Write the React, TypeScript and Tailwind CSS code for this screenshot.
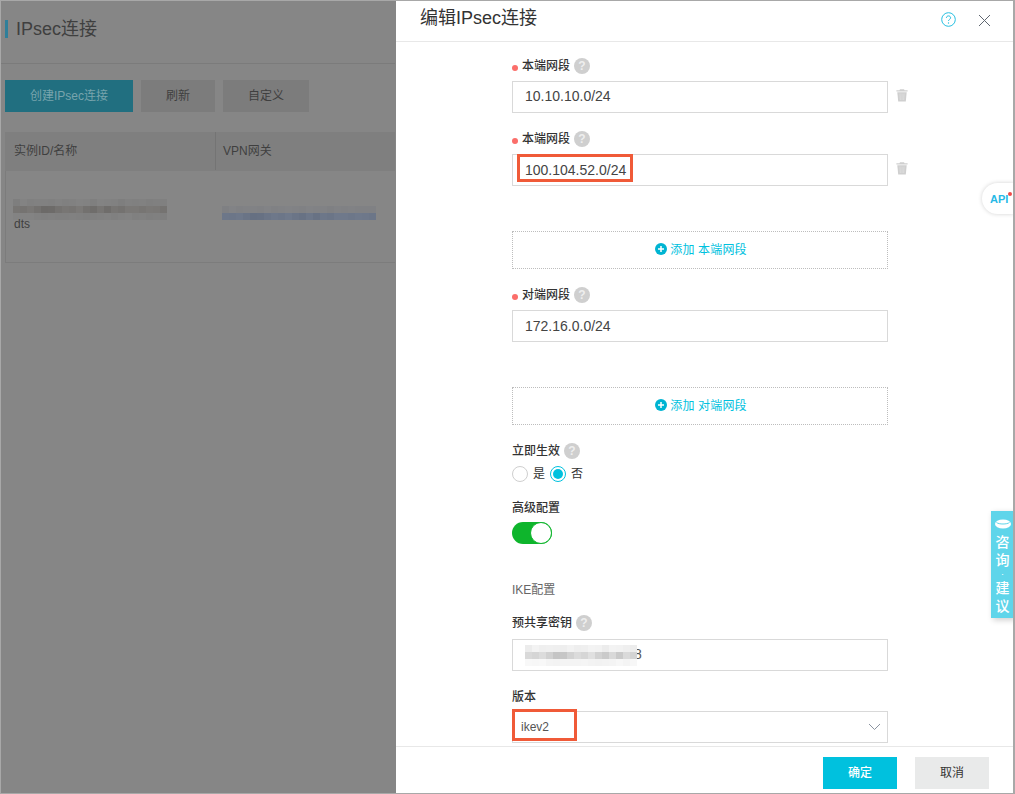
import React from "react";

const font = { fontFamily: '"Liberation Sans", "Noto Sans CJK SC", sans-serif' };

function Help() {
  return (
    <span className="ml-1 flex h-4 w-4 items-center justify-center rounded-full bg-[#cfcfcf] text-[12px] font-bold leading-none text-[#eeeeee]">?</span>
  );
}

function Label({ text, req, help = true }: { text: string; req?: boolean; help?: boolean }) {
  return (
    <div className="flex h-4 items-center text-[12px] font-medium leading-4 text-[#333333]">
      {req && <span className="mr-1 mt-[3px] h-[6px] w-[6px] rounded-full bg-[#fb6e6a]" />}
      <span>{text}</span>
      {help && <Help />}
    </div>
  );
}

function Trash() {
  return (
    <svg width="12" height="14" viewBox="0 0 12 14" className="ml-2 mt-[7px] self-start">
      <path d="M4 1.200h4l.5 1H11.600v1.300H.4V2.200h3.100z" fill="#cfcfcf" />
      <path d="M1.300 4.200h9.400L9.800 13.400H2.200z" fill="#cfcfcf" />
      <path d="M4 5.500l.3 6.500M6 5.500V12M8 5.500L7.700 12" stroke="#e6e6e6" strokeWidth=".6" />
    </svg>
  );
}

function Field({ value, trash, flush, children }: { value?: string; trash?: boolean; flush?: boolean; children?: React.ReactNode }) {
  return (
    <div className="flex">
      <div className={flush ? "relative flex h-8 w-[376px] items-center border border-[#d9d9d9] bg-white pl-3 pt-[1px] text-[14px] text-[#444444]" : "relative flex h-8 w-[376px] items-center border border-[#d9d9d9] bg-white pb-[1px] pl-3 text-[14px] text-[#444444]"}>
        {value}
        {children}
      </div>
      {trash && <Trash />}
    </div>
  );
}

function AddBox({ text }: { text: string }) {
  return (
    <div className="flex h-[38px] w-[376px] items-center justify-center border border-dotted border-[#bdbdbd] text-[12px] text-[#00c1de]">
      <svg width="12" height="12" viewBox="0 0 12 12" className="mr-[3px] mb-[2px] ml-[2px]">
        <circle cx="6" cy="6" r="6" fill="#00b4d2" />
        <path d="M6 3v6M3 6h6" stroke="#fff" strokeWidth="1.500" />
      </svg>
      <span className="tracking-[0.15px]">{text}</span>
    </div>
  );
}

function Blur({ rows, cell, className }: { rows: string[][]; cell: number; className: string }) {
  return (
    <div className={className}>
      {rows.map((r, i) => (
        <div key={i} className="flex">
          {r.map((c, j) => (
            <div key={j} style={{ width: cell, height: cell, background: c }} />
          ))}
        </div>
      ))}
    </div>
  );
}

const shade = (base: number[], seed: number, amp: number) => {
  const n = (Math.sin(seed * 12.9898) * 43758.5453) % 1;
  const v = Math.abs(n) * amp;
  return `rgb(${base[0] - v},${base[1] - v},${base[2] - v})`;
};

const make = (w: number, bases: number[][], amps: number[]) =>
  bases.map((b, i) => Array.from({ length: w }, (_, j) => shade(b, i * 31 + j + 1, amps[i])));

const nameBlur = make(22, [[131, 131, 131], [124, 122, 120], [131, 131, 131]], [5, 16, 4]);
const gwBlur = make(22, [[130, 131, 134], [112, 122, 140]], [3, 10]);
const keyBlur = make(16, [[243, 243, 243], [226, 226, 226], [248, 248, 248]], [8, 30, 6]);

export default function App() {
  return (
    <div style={font} className="relative flex h-[794px] w-[1015px] overflow-hidden border border-r-2 border-[#a8a8a8] bg-[#868686]">
      {/* dimmed page */}
      <div className="w-[394px] shrink-0 text-[#3f3f3f]">
        <div className="flex h-[63px] items-start border-b border-[#7b7b7b] pl-1 pt-[19px]">
          <span className="mr-2 h-[18px] w-[3px] bg-[#2f7f9a]" />
          <span className="-mt-[1px] text-[18px] leading-[20px]">IPsec连接</span>
        </div>
        <div className="ml-1 mt-4 flex gap-2 text-[12px] leading-8">
          <div className="h-8 w-[128px] bg-[#216f80] text-center text-[#78a4ad]">创建IPsec连接</div>
          <div className="h-8 w-[74px] bg-[#7c7c7c] text-center">刷新</div>
          <div className="h-8 w-[86px] bg-[#7c7c7c] text-center">自定义</div>
        </div>
        <div className="ml-1 mt-5">
          <div className="flex h-[39px] items-center bg-[#7f7f7f] pb-[1px] text-[12px]">
            <div className="flex h-full w-[211px] items-center border-r border-[#747474] pl-[9px]">实例ID/名称</div>
            <div className="pl-[7px]">VPN网关</div>
          </div>
          <div className="relative h-[92px] border-b border-l border-[#7c7c7c]">
            <Blur rows={nameBlur} cell={7} className="absolute left-[7px] top-[28px]" />
            <span className="absolute left-[8px] top-[45px] text-[12px] leading-4">dts</span>
            <Blur rows={gwBlur} cell={7} className="absolute left-[216px] top-[35px]" />
          </div>
        </div>
      </div>

      {/* drawer */}
      <div className="ml-[1px] flex w-[618px] shrink-0 flex-col bg-white">
        <div className="flex h-[41px] shrink-0 items-start justify-between border-b border-[#e8e8e8] pl-6 pr-[23px] pt-[5px]">
          <span className="text-[18px] leading-[24px] text-[#333333]">编辑IPsec连接</span>
          <div className="flex items-center gap-[22px] pt-[6px]">
            <svg width="15" height="15" viewBox="0 0 15 15">
              <circle cx="7.500" cy="7.500" r="6.800" fill="none" stroke="#25bfe0" strokeWidth="1" />
              <path d="M5.400 5.900c0-1.300 1-2 2.100-2s2.100.7 2.100 1.900c0 1.600-2.100 1.600-2.100 3.100" fill="none" stroke="#25bfe0" strokeWidth="1" />
              <circle cx="7.500" cy="11" r=".7" fill="#25bfe0" />
            </svg>
            <svg width="13" height="13" viewBox="0 0 13 13" className="mt-[1px]">
              <path d="M1 1l11 11M12 1L1 12" stroke="#5f6670" strokeWidth="1" />
            </svg>
          </div>
        </div>

        <div className="relative flex-1 overflow-hidden pl-[116px] pt-4">
          <Label text="本端网段" req />
          <div className="mt-[7px]"><Field value="10.10.10.0/24" trash /></div>
          <div className="mt-[18px]"><Label text="本端网段" req /></div>
          <div className="mt-[7px]">
            <Field value="100.104.52.0/24" trash flush>
              <span className="absolute left-1 -top-[1px] h-[28px] w-[116px] border-[3px] border-[#f05a38]" />
            </Field>
          </div>
          <div className="mt-[45px]"><AddBox text="添加 本端网段" /></div>
          <div className="mt-[18px]"><Label text="对端网段" req /></div>
          <div className="mt-[7px]"><Field value="172.16.0.0/24" flush /></div>
          <div className="mt-[45px]"><AddBox text="添加 对端网段" /></div>
          <div className="mt-[18px]"><Label text="立即生效" /></div>
          <div className="mt-[7px] flex h-4 items-center text-[12px] text-[#333333]">
            <span className="h-4 w-4 rounded-full border border-[#cfcfcf]" />
            <span className="ml-[5px]">是</span>
            <span className="ml-[5px] flex h-4 w-4 items-center justify-center rounded-full border border-[#00c1de]">
              <span className="h-[10px] w-[10px] rounded-full bg-[#00c1de]" />
            </span>
            <span className="ml-[5px]">否</span>
          </div>
          <div className="mt-[18px]"><Label text="高级配置" help={false} /></div>
          <div className="relative mt-[6px] h-[22px] w-10 rounded-full bg-[#0eb52c]">
            <span className="absolute right-0 top-0 h-[22px] w-[22px] rounded-full border border-[#0eb52c] bg-white" />
          </div>
          <div className="mt-[38px] h-4 text-[12px] leading-4 text-[#666666]">IKE配置</div>
          <div className="mt-[17px]"><Label text="预共享密钥" /></div>
          <div className="mt-2">
            <Field>
              <span className="ml-[109px] text-[14px] text-[#555555]">8</span>
              <Blur rows={keyBlur} cell={7} className="absolute left-3 top-[5px]" />
            </Field>
          </div>
          <div className="mt-[18px]"><Label text="版本" help={false} /></div>
          <div className="mt-[6px]">
            <div className="relative flex h-8 w-[376px] items-center justify-between border border-[#d9d9d9] pl-2 pr-[6px] text-[12px] text-[#555555]">
              ikev2
              <svg width="13" height="8" viewBox="0 0 13 8"><path d="M1 1l5.500 5.500L12 1" fill="none" stroke="#8a93a0" strokeWidth="1" /></svg>
              <span className="absolute -left-[1px] -top-[3px] h-[32px] w-[65px] border-[3px] border-[#f05a38]" />
            </div>
          </div>
        </div>

        <div className="flex h-[47px] shrink-0 justify-end gap-[18px] border-t border-[#e8e8e8] pr-[25px] pt-[10px] text-[12px] leading-8">
          <div className="h-8 w-[74px] bg-[#00c1de] text-center font-medium text-white">确定</div>
          <div className="h-8 w-[74px] bg-[#e9eaea] text-center text-[#333333]">取消</div>
        </div>
      </div>

      {/* floating widgets */}
      <div className="absolute right-[-1px] top-[182px] flex h-[31px] w-[32px] items-center rounded-l-full bg-white pl-2 pt-[2px] text-[11px] font-bold text-[#27b9e6] shadow-[0_0_4px_rgba(0,0,0,0.18)]">
        API
        <span className="absolute right-[2px] top-[9px] h-[4px] w-[4px] rounded-full bg-[#f04a4a]" />
      </div>
      <div className="absolute right-[-1px] top-[510px] flex h-[107px] w-[23px] flex-col items-center bg-[#5fd5ea] pt-[8px] text-[14px] font-medium leading-[18px] text-white shadow-[2px_2px_6px_rgba(0,0,0,0.2)]">
        <svg width="16" height="10" viewBox="0 0 16 10" className="mb-1 shrink-0">
          <ellipse cx="8" cy="5" rx="8" ry="4.500" fill="#fff" />
          <path d="M1.500 3.500C4 5.500 12 5.500 14.500 3.500" fill="none" stroke="#5fd5ea" strokeWidth="1" />
        </svg>
        <span>咨</span>
        <span>询</span>
        <span className="text-[9px] leading-[10px]">·</span>
        <span>建</span>
        <span>议</span>
      </div>
    </div>
  );
}
